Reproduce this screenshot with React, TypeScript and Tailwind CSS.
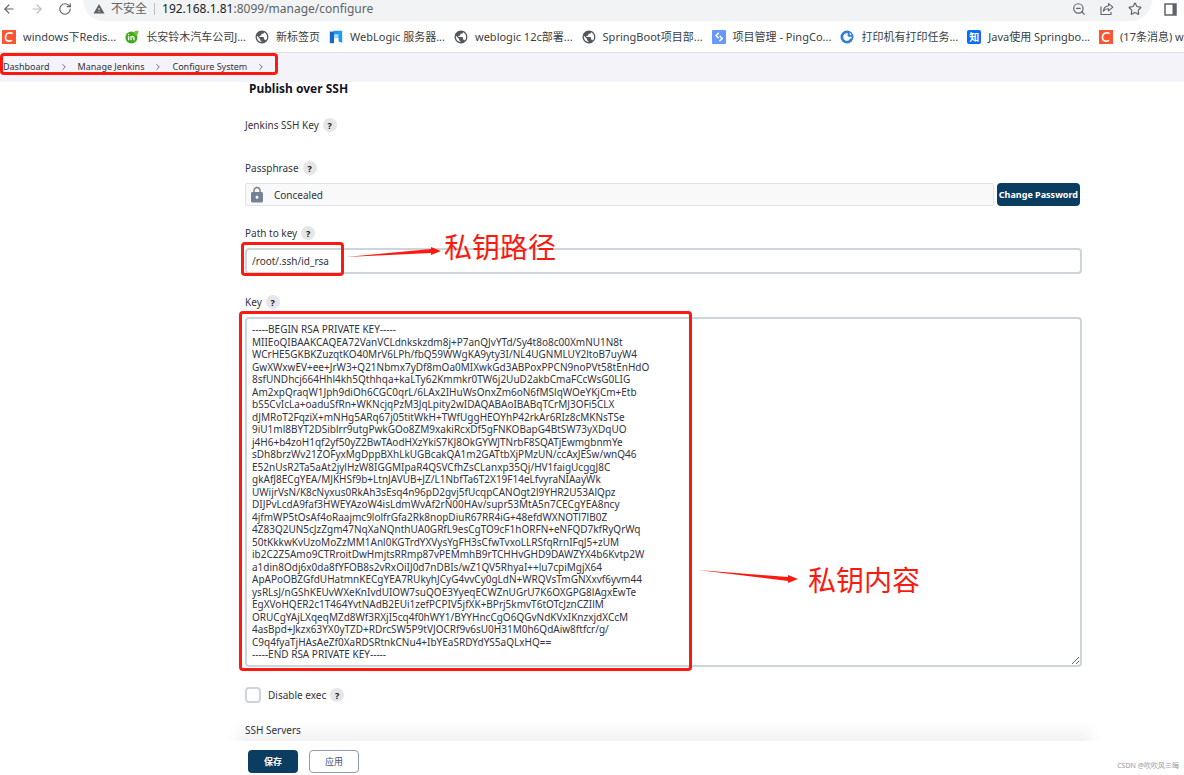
import React from 'react';
import { ArrowLeft, ArrowRight, RotateCw, ZoomOut, Star, ChevronRight } from 'lucide-react';
import { MdWarning, MdLock, MdPublic } from 'react-icons/md';

interface Bookmark {
  label: string;
  icon: React.ReactNode;
}

const CsdnIcon = () => (
  <span className="flex h-3.5 w-3.5 shrink-0 items-center justify-center bg-[#fc5531]">
    <svg viewBox="0 0 14 14" className="h-3.5 w-3.5" fill="none" stroke="#fff" strokeWidth="1.6">
      <path d="M10.6 3.7C9.8 3 8.6 2.8 7.4 2.9 5 3.1 3.6 4.9 3.5 7.2c-.1 2.3 1.2 3.8 3.4 3.9 1.2 0 2.3-.2 3.2-.8" />
    </svg>
  </span>
);

const InIcon = () => (
  <svg viewBox="0 0 14 14" className="h-3.5 w-3.5 shrink-0">
    <circle cx="6.4" cy="7.6" r="6" fill="#3faa1c" />
    <path d="M8 2.6C9 .9 11 .6 13.4.4c.2 2-.4 4.2-2.2 5z" fill="#7cc142" />
    <path d="M3.6 6.2v4M6 10.2v-4M6 7.6c.6-1.6 3-1.5 3 .4v2.2" fill="none" stroke="#fff" strokeWidth="1.3" />
    <circle cx="3.6" cy="4.5" r=".8" fill="#fff" />
  </svg>
);

// Dark disc with light land masses, used for pages without a favicon
const GlobeIcon = () => (
  <span className="flex h-3.5 w-3.5 shrink-0 items-center justify-center">
    <MdPublic className="h-3.5 w-3.5 scale-110 text-[#53575c]" />
  </span>
);

const FlagIcon = () => (
  <svg viewBox="0 0 14 14" className="h-3.5 w-3.5 shrink-0">
    <path d="M.8 1.600H5v11.600H.8z" fill="#1668c7" />
    <path d="M4 .8h9.200v12l-3.600-1.400V8H5V3.200z" fill="#1e9bf0" />
    <path d="M5 4.200h4.600v3L5 9z" fill="#a9dcfc" />
  </svg>
);

const PingCodeIcon = () => (
  <svg viewBox="0 0 14 14" className="h-3.5 w-3.5 shrink-0">
    <rect width="14" height="14" rx="1" fill="#6698ff" />
    <path d="M6.8 2.8L4 5.600l2.600 2.600M7.400 11.200l2.800-2.800L7.600 5.800" fill="none" stroke="#fff" strokeWidth="1.500" />
  </svg>
);

const PrinterIcon = () => (
  <svg viewBox="0 0 14 14" className="h-3.5 w-3.5 shrink-0">
    <circle cx="7" cy="7" r="6.5" fill="#2f7fd6" />
    <path d="M8 3.400C5.400 2.800 3.200 4.600 3.200 7c0 2.600 2.200 4.400 4.600 3.800 1.200-.3 1.800-1 2-2l2-.6-.4-1.800-2.400.6-1.600-1.400z" fill="#fff" />
    <path d="M9.4 2.4l2.4 2-1.8.8z" fill="#fff" />
  </svg>
);

const ZhihuIcon = () => (
  <span className="flex h-3.5 w-3.5 shrink-0 items-center justify-center rounded-xs bg-[#0a6cff] text-[10px] leading-none font-bold text-white">知</span>
);

const bookmarks: Bookmark[] = [
  { label: 'windows下Redis...', icon: <CsdnIcon /> },
  { label: '长安铃木汽车公司J...', icon: <InIcon /> },
  { label: '新标签页', icon: <GlobeIcon /> },
  { label: 'WebLogic 服务器...', icon: <FlagIcon /> },
  { label: 'weblogic 12c部署...', icon: <GlobeIcon /> },
  { label: 'SpringBoot项目部...', icon: <GlobeIcon /> },
  { label: '项目管理 - PingCo...', icon: <PingCodeIcon /> },
  { label: '打印机有打印任务...', icon: <PrinterIcon /> },
  { label: 'Java使用 Springbo...', icon: <ZhihuIcon /> },
  { label: '(17条消息) w', icon: <CsdnIcon /> },
];

const crumbs = ['Dashboard', 'Manage Jenkins', 'Configure System'];

const privateKey = `-----BEGIN RSA PRIVATE KEY-----
MIIEoQIBAAKCAQEA72VanVCLdnkskzdm8j+P7anQJvYTd/Sy4t8o8c00XmNU1N8t
WCrHE5GKBKZuzqtKO40MrV6LPh/fbQ59WWgKA9yty3I/NL4UGNMLUY2ltoB7uyW4
GwXWxwEV+ee+JrW3+Q21Nbmx7yDf8mOa0MIXwkGd3ABPoxPPCN9noPVt58tEnHdO
8sfUNDhcj664Hhl4kh5Qthhqa+kaLTy62Kmmkr0TW6j2UuD2akbCmaFCcWsG0LIG
Am2xpQraqW1Jph9diOh6CGC0qrL/6LAx2IHuWsOnxZm6oN6fMSlqWOeYKjCm+Etb
bS5CvIcLa+oaduSfRn+WKNcjqPzM3JqLpity2wIDAQABAoIBABqTCrMJ3OFi5CLX
dJMRoT2FqziX+mNHg5ARq67j05titWkH+TWfUggHEOYhP42rkAr6RIz8cMKNsTSe
9iU1ml8BYT2DSiblrr9utgPwkGOo8ZM9xakiRcxDf5gFNKOBapG4BtSW73yXDqUO
j4H6+b4zoH1qf2yf50yZ2BwTAodHXzYkiS7KJ8OkGYWJTNrbF8SQATjEwmgbnmYe
sDh8brzWv21ZOFyxMgDppBXhLkUGBcakQA1m2GATtbXjPMzUN/ccAxJESw/wnQ46
E52nUsR2Ta5aAt2jylHzW8IGGMIpaR4QSVCfhZsCLanxp35Qj/HV1faigUcggJ8C
gkAfJ8ECgYEA/MJKHSf9b+LtnJAVUB+JZ/L1NbfTa6T2X19F14eLfvyraNIAayWk
UWijrVsN/K8cNyxus0RkAh3sEsq4n96pD2gvj5fUcqpCANOgt2l9YHR2U53AlQpz
DIJPvLcdA9faf3HWEYAzoW4isLdmWvAf2rN00HAv/supr53MtA5n7CECgYEA8ncy
4jfmWP5tOsAf4oRaajmc9lolfrGfa2Rk8nopDiuR67RR4iG+48efdWXNOTl7lB0Z
4Z83Q2UN5cJzZgm47NqXaNQnthUA0GRfL9esCgTO9cF1hORFN+eNFQD7kfRyQrWq
50tKkkwKvUzoMoZzMM1Anl0KGTrdYXVysYgFH3sCfwTvxoLLRSfqRrnIFqJ5+zUM
ib2C2Z5Amo9CTRroitDwHmjtsRRmp87vPEMmhB9rTCHHvGHD9DAWZYX4b6Kvtp2W
a1din8Odj6x0da8fYFOB8s2vRxOiIJ0d7nDBIs/wZ1QV5RhyaI++lu7cpiMgjX64
ApAPoOBZGfdUHatmnKECgYEA7RUkyhJCyG4vvCy0gLdN+WRQVsTmGNXxvf6yvm44
ysRLsJ/nGShKEUvWXeKnIvdUIOW7suQOE3YyeqECWZnUGrU7K6OXGPG8lAgxEwTe
EgXVoHQER2c1T464YvtNAdB2EUi1zefPCPIV5jfXK+BPrj5kmvT6tOTcJznCZIlM
ORUCgYAjLXqeqMZd8Wf3RXjI5cq4f0hWY1/BYYHncCgO6QGvNdKVxIKnzxjdXCcM
4asBpd+Jkzx63YX0yTZD+RDrcSW5P9tVJOCRf9v6sU0H31M0h6QdAiw8ftfcr/g/
C9q4fyaTjHAsAeZf0XaRDSRtnkCNu4+IbYEaSRDYdYS5aQLxHQ==
-----END RSA PRIVATE KEY-----`;

const HelpButton = ({ topic }: { topic: string }) => (
  <button
    type="button"
    aria-label={`Help for feature: ${topic}`}
    className="flex h-3.5 w-3.5 items-center justify-center rounded-full bg-[#e6e6e8] text-[9px] leading-none font-bold text-[#14141f]"
  >
    ?
  </button>
);

const FieldLabel = ({ text, htmlFor }: { text: string; htmlFor?: string }) => (
  <div className="flex h-3.5 items-center gap-1">
    {htmlFor ? <label htmlFor={htmlFor}>{text}</label> : <span>{text}</span>}
    <HelpButton topic={text} />
  </div>
);

const BrowserBar = () => (
  <header className="bg-white text-[#3c4043]">
    <div className="flex h-[21px] items-start">
      <div className="flex h-[18px] w-[83px] shrink-0 items-center gap-3.5 pl-0.5">
        <button type="button" aria-label="Back"><ArrowLeft className="h-3.5 w-3.5 text-[#5f6368]" /></button>
        <button type="button" aria-label="Forward"><ArrowRight className="h-3.5 w-3.5 text-[#babcbe]" /></button>
        <button type="button" aria-label="Reload"><RotateCw className="h-3.5 w-3.5 text-[#5f6368]" /></button>
      </div>
      <div className="flex h-[21px] flex-1 items-center rounded-b-full bg-[#f1f3f4] pr-2.5 pb-[3px] pl-2.5">
        <MdWarning className="h-3 w-3 text-[#5f6368]" />
        <span className="ml-1.5 text-[12px] leading-4 text-[#5f6368]">不安全</span>
        <span className="mx-[7px] h-3 w-px bg-[#bdc1c6]" />
        <span className="flex-1 text-[12px] leading-4 text-[#5f6368]">
          <span className="text-[#202124]">192.168.1.81</span>:8099/manage/configure
        </span>
        <div className="flex items-center gap-3.5 text-[#5f6368]">
          <button type="button" aria-label="Zoom"><ZoomOut className="h-3.5 w-3.5" /></button>
          <button type="button" aria-label="Share">
            <svg viewBox="0 0 14 14" className="h-3.5 w-3.5" fill="none" stroke="currentColor" strokeWidth="1.1">
              <path d="M1 4.5v8h10v-2.5" />
              <path d="M8.6 1.6l4.2 3.6-4.2 3.6V6.7C6.2 6.6 4.6 7.4 3.4 9.2c.3-2.8 2-4.9 5.2-5.4z" strokeLinejoin="round" />
            </svg>
          </button>
          <button type="button" aria-label="Bookmark"><Star className="h-3.5 w-3.5" /></button>
        </div>
      </div>
      <button type="button" aria-label="Side panel" className="mr-[7px] ml-3 flex h-[18px] items-center">
        <svg viewBox="0 0 13 13" className="h-[13px] w-[13px] text-[#5f6368]">
          <path d="M1 1h11v11H1z" fill="none" stroke="currentColor" strokeWidth="1.5" />
          <path d="M8.5 1H12v11H8.5z" fill="currentColor" />
        </svg>
      </button>
    </div>
    <nav className="flex h-8 items-center gap-[9px] overflow-hidden border-b border-[#dcdee0] pl-0.5 text-[11px] whitespace-nowrap">
      {bookmarks.map(b => (
        <a key={b.label} href="#" className="flex shrink-0 items-center gap-[7px]">
          {b.icon}
          <span>{b.label}</span>
        </a>
      ))}
    </nav>
  </header>
);

const Breadcrumbs = () => (
  <nav className="relative flex h-[29px] items-center gap-[9px] bg-[#f4f3f9] pb-0.5 pl-[3px] text-[9px]">
    {crumbs.map(c => (
      <React.Fragment key={c}>
        <a href="#">{c}</a>
        <ChevronRight className="h-2.5 w-2.5 text-[#55555f]" />
      </React.Fragment>
    ))}
    <span className="pointer-events-none absolute top-0 left-0 h-[22px] w-[278px] rounded-sm border-[3px] border-[#fb1a10]" />
  </nav>
);

// Red arrow drawn as a wedge that widens towards the head
const Arrow = ({ points, head, className }: { points: string; head: string; className: string }) => (
  <svg viewBox="0 0 100 20" className={`pointer-events-none absolute h-5 w-[100px] ${className}`} fill="#fb1a10">
    <polygon points={points} />
    <polygon points={head} />
  </svg>
);

export default function App() {
  return (
    <div className="min-h-screen bg-white font-['Noto_Sans','Noto_Sans_CJK_SC',sans-serif] text-[10px] leading-[14px] text-[#33333d]">
      <BrowserBar />
      <Breadcrumbs />

      <form className="pr-[102px] pl-[245px]" onSubmit={e => e.preventDefault()}>
        <h1 className="pl-1 text-[12px] leading-[14px] font-bold text-[#14141f]">Publish over SSH</h1>

        <div className="mt-[22px]">
          <FieldLabel text="Jenkins SSH Key" />
        </div>

        <div className="mt-[29px]">
          <FieldLabel text="Passphrase" />
          <div className="mt-2 flex gap-[3px] pr-0.5">
            <div className="flex h-[23px] flex-1 items-center gap-2 rounded-xs border border-[#e1e4e7] bg-[#f9f9f9] pl-0.5">
              <MdLock className="h-[18px] w-[18px] text-[#758195]" />
              <span>Concealed</span>
            </div>
            <button type="button" className="h-[23px] rounded-sm bg-[#0b3d61] px-0.5 text-[9px] font-bold text-white">
              Change Password
            </button>
          </div>
        </div>

        <div className="relative mt-5">
          <FieldLabel text="Path to key" htmlFor="keyPath" />
          <input
            id="keyPath"
            type="text"
            defaultValue="/root/.ssh/id_rsa"
            className="mt-2 block h-[26px] w-full rounded-sm border-2 border-[#cdd4db] px-[5px] outline-none"
          />
          <span className="pointer-events-none absolute top-4 -left-1 h-[34px] w-[103px] rounded-sm border-[3px] border-[#fb1a10]" />
          <Arrow className="top-4 left-[100px]" points="1,15 86,7 86,11" head="86,5 96,9 86,13" />
          <span className="absolute top-1 left-[199px] text-[28px] leading-[34px] text-[#fb1a10]">私钥路径</span>
        </div>

        <div className="relative mt-[21px]">
          <FieldLabel text="Key" htmlFor="key" />
          <textarea
            id="key"
            spellCheck={false}
            defaultValue={privateKey}
            className="mt-2 block h-[350px] w-full resize-y overflow-auto rounded-sm border-2 border-[#cdd4db] px-[5px] py-1 leading-tight whitespace-pre outline-none"
          />
          <span className="pointer-events-none absolute top-4 -left-1.5 h-[360px] w-[453px] rounded-sm border-[3px] border-[#fb1a10]" />
          <Arrow className="top-[270px] left-[453px]" points="0,5 90,12 90,16" head="90,10 100,14 90,18" />
          <span className="absolute top-[268px] left-[563px] text-[28px] leading-[34px] text-[#fb1a10]">私钥内容</span>
        </div>

        <div className="mt-5 flex h-4 items-center gap-1">
          <input
            id="disableExec"
            type="checkbox"
            className="h-4 w-4 appearance-none rounded-sm border-2 border-[#cdd4db] bg-white checked:bg-[#0b3d61]"
          />
          <label htmlFor="disableExec" className="pl-[3px]">Disable exec</label>
          <HelpButton topic="Disable exec" />
        </div>

        <h2 className="mt-5">SSH Servers</h2>
      </form>

      <footer className="relative mt-1 flex items-center gap-[11px] pt-[9px] pl-[248px]">
        <div className="pointer-events-none absolute -top-5 right-[84px] left-[228px] h-5 bg-linear-to-t from-black/5 to-transparent mask-x-from-98%" />
        <button type="submit" className="h-[23px] w-[50px] rounded-sm bg-[#0b3d61] text-[9px] font-bold text-white">保存</button>
        <button type="button" className="h-[23px] w-[50px] rounded-sm border border-[#8f9dad] bg-white text-[9px] text-[#4d4d66]">应用</button>
        <span className="ml-auto pt-2 pr-[5px] text-[7px] text-[#9a9a9a]">CSDN @吹吹风≡晦</span>
      </footer>
    </div>
  );
}
